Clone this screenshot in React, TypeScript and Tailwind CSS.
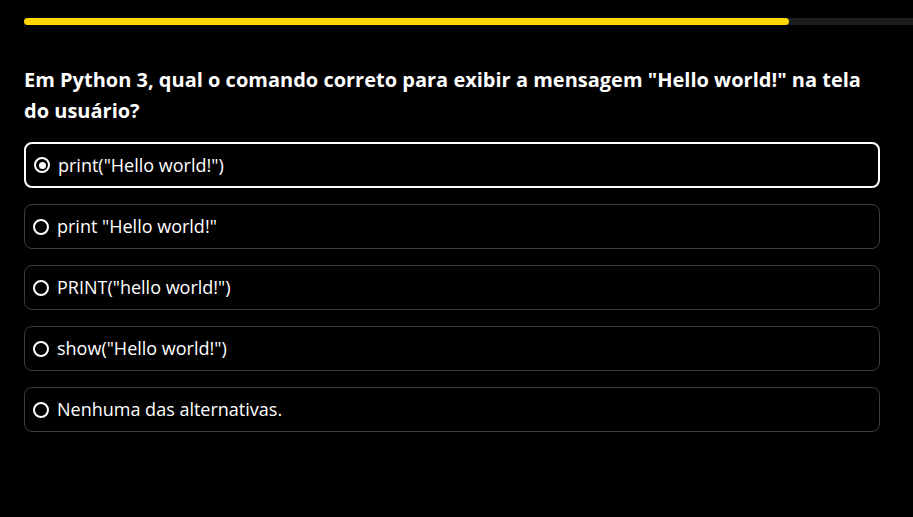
import { useState } from "react";

const options = [
  'print("Hello world!")',
  'print "Hello world!"',
  'PRINT("hello world!")',
  'show("Hello world!")',
  "Nenhuma das alternativas.",
];

function Radio({ checked }: { checked: boolean }) {
  return (
    <span className="w-[16px] h-[16px] rounded-full border-2 border-white flex items-center justify-center shrink-0">
      {checked && <span className="w-[7px] h-[7px] rounded-full bg-white" />}
    </span>
  );
}

export default function App() {
  const [selected, setSelected] = useState(0);
  const progress = 86;

  return (
    <div
      className="min-h-[517px] bg-black text-white"
      style={{ fontFamily: '"Open Sans", sans-serif' }}
    >
      {/* Progress */}
      <div className="pt-[18px] pl-6">
        <div className="h-[7px] bg-[#1e1e1e] rounded-l-full">
          <div
            className="h-full bg-[#ffd600] rounded-full"
            style={{ width: `${progress}%` }}
          />
        </div>
      </div>

      <div className="px-6 pr-[33px]">
        <h1 className="mt-[39px] text-[20px] leading-[31px] font-bold">
          Em Python 3, qual o comando correto para exibir a mensagem "Hello
          world!" na tela do usuário?
        </h1>

        <div className="mt-[16px] flex flex-col gap-4">
          {options.map((opt, i) => (
            <button
              key={i}
              onClick={() => setSelected(i)}
              className={`flex items-center gap-[8px] px-[8px] rounded-lg text-left text-[18px] ${
                selected === i
                  ? "h-[46px] border-2 border-white"
                  : "h-[45px] border border-[#3c3c3c]"
              }`}
            >
              <Radio checked={selected === i} />
              <span>{opt}</span>
            </button>
          ))}
        </div>
      </div>
    </div>
  );
}
